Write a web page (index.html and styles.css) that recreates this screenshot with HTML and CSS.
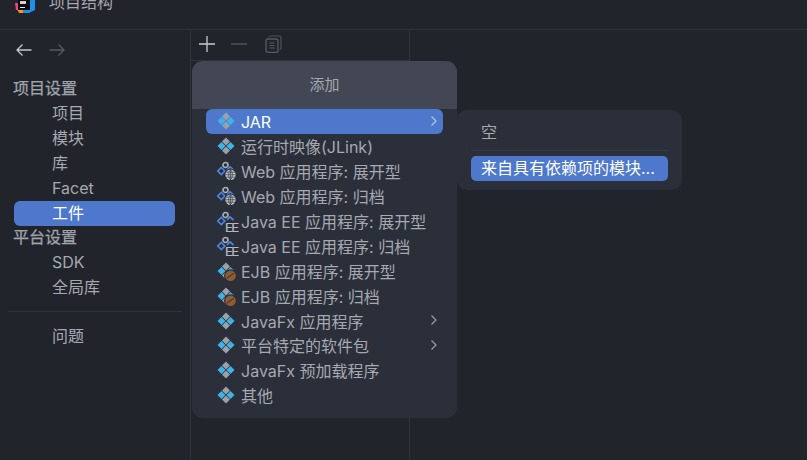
FILE: index.html
```html
<!DOCTYPE html>
<html lang="zh">
<head>
<meta charset="utf-8">
<title>项目结构</title>
<link rel="stylesheet" href="styles.css">
</head>
<body>
<svg class="defs" width="0" height="0" aria-hidden="true">
  <defs>
    <symbol id="diamonds" viewBox="0 0 18 18">
      <path d="M9 .5 13 4.500 9 8.500 5 4.500Z" fill="#9aa1ab"/>
      <path d="M9 9.500 13 13.500 9 17.500 5 13.500Z" fill="#9aa1ab"/>
      <path d="M4.500 5 8.500 9 4.500 13 .5 9Z" fill="#3fb3e6"/>
      <path d="M13.500 5 17.500 9 13.500 13 9.500 9Z" fill="#3fb3e6"/>
    </symbol>
    <symbol id="web-base" viewBox="0 0 18 18">
      <circle cx="8.500" cy="3" r="2.500" fill="none" stroke="#a6acb5" stroke-width="1.700"/>
      <path d="M4.300 5.500 7.800 9 4.300 12.500 .8 9Z" fill="none" stroke="#4a86e0" stroke-width="1.700"/>
      <path d="M10 7.800 13 5 16.500 8" fill="none" stroke="#4a86e0" stroke-width="1.700"/>
    </symbol>
    <symbol id="globe" viewBox="0 0 18 18">
      <circle cx="13.500" cy="12.700" r="6.200" fill="#2b2f39"/>
      <circle cx="13.500" cy="12.700" r="5.200" fill="#bcc1c8"/>
      <path d="M8.300 12.700H18.700M13.500 7.500V17.900M9 10.200H18M9 15.200H18M13.500 7.500C11 10 11 15.400 13.500 17.900M13.500 7.500C16 10 16 15.400 13.500 17.900" fill="none" stroke="#2b2f39" stroke-width=".6"/>
    </symbol>
    <symbol id="bean" viewBox="0 0 18 18">
      <circle cx="13.500" cy="13.700" r="6.500" fill="#2b2f39"/>
      <circle cx="13.500" cy="13.700" r="5.300" fill="#8f5b33"/>
      <path d="M9.800 16.200 17 11.200" stroke="#2b2f39" stroke-width="1"/>
    </symbol>
    <symbol id="chev" viewBox="0 0 10 12">
      <path d="M2.500 1.500 7 6 2.500 10.500" fill="none" stroke="currentColor" stroke-width="1.200"/>
    </symbol>
  </defs>
</svg>

<div class="window">
  <header class="titlebar">
    <svg class="logo" width="20" height="13" viewBox="0 0 20 13" aria-hidden="true">
      <path d="M0 3H4V10H1Z" fill="#ee3f8c"/>
      <path d="M2 9H9V13H4Z" fill="#f8941e"/>
      <path d="M14 0H20V10L14 13H8V9H14Z" fill="#1e8fe8"/>
      <rect x="3" y="0" width="12" height="10" fill="#0b0b0e"/>
      <rect x="5" y="7" width="5" height="1" fill="#e6e6e6"/>
      <rect x="5" y="1" width="6" height="3" fill="#cfcfcf"/>
    </svg>
    <span class="title">项目结构</span>
  </header>

  <div class="panes">
    <nav class="sidebar">
      <div class="history">
        <svg width="18" height="14" viewBox="0 0 18 14" aria-hidden="true"><path d="M16.500 7H2M7.500 1.500 2 7l5.500 5.500" fill="none" stroke="#c3c7ce" stroke-width="1.300"/></svg>
        <svg width="18" height="14" viewBox="0 0 18 14" aria-hidden="true"><path d="M1.500 7H16M10.500 1.500 16 7l-5.500 5.500" fill="none" stroke="#565a63" stroke-width="1.300"/></svg>
      </div>
      <div class="group">项目设置</div>
      <div class="item">项目</div>
      <div class="item">模块</div>
      <div class="item">库</div>
      <div class="item">Facet</div>
      <div class="item selected">工件</div>
      <div class="group second">平台设置</div>
      <div class="item">SDK</div>
      <div class="item">全局库</div>
      <div class="rule"></div>
      <div class="item">问题</div>
    </nav>

    <section class="middle">
      <div class="toolbar">
        <svg width="18" height="18" viewBox="0 0 18 18" aria-hidden="true"><path d="M9 1V17M1 9H17" stroke="#c9ccd3" stroke-width="1.300"/></svg>
        <svg width="18" height="18" viewBox="0 0 18 18" aria-hidden="true"><path d="M0 9H16" stroke="#565a63" stroke-width="1.300"/></svg>
        <svg width="18" height="18" viewBox="0 0 18 18" aria-hidden="true">
          <path d="M5 2.500A1.500 1.500 0 0 1 6.500 1H15A2 2 0 0 1 17 3V13A1.500 1.500 0 0 1 15.500 14.500" fill="none" stroke="#4f525b" stroke-width="1.200"/>
          <rect x="2" y="4" width="12" height="13.500" rx="2" fill="none" stroke="#565a63" stroke-width="1.300"/>
          <path d="M5.500 8H10.500M5.500 10.500H10.500M5.500 13H10.500" stroke="#565a63" stroke-width="1.200"/>
        </svg>
      </div>
    </section>

    <section class="detail"></section>
  </div>

  <div class="menu">
    <div class="menu-head">添加</div>
    <div class="menu-list">
      <div class="row active"><svg class="ic"><use href="#diamonds"/></svg><span class="latin">JAR</span><svg class="chev"><use href="#chev"/></svg></div>
      <div class="row"><svg class="ic"><use href="#diamonds"/></svg><span>运行时映像(JLink)</span></div>
      <div class="row"><svg class="ic"><use href="#web-base"/><use href="#globe"/></svg><span>Web 应用程序: 展开型</span></div>
      <div class="row"><svg class="ic"><use href="#web-base"/><use href="#globe"/></svg><span>Web 应用程序: 归档</span></div>
      <div class="row"><svg class="ic"><use href="#web-base"/></svg><span class="ee">EE</span><span>Java EE 应用程序: 展开型</span></div>
      <div class="row"><svg class="ic"><use href="#web-base"/></svg><span class="ee">EE</span><span>Java EE 应用程序: 归档</span></div>
      <div class="row"><svg class="ic"><use href="#diamonds"/><use href="#bean"/></svg><span>EJB 应用程序: 展开型</span></div>
      <div class="row"><svg class="ic"><use href="#diamonds"/><use href="#bean"/></svg><span>EJB 应用程序: 归档</span></div>
      <div class="row"><svg class="ic"><use href="#diamonds"/></svg><span>JavaFx 应用程序</span><svg class="chev"><use href="#chev"/></svg></div>
      <div class="row"><svg class="ic"><use href="#diamonds"/></svg><span>平台特定的软件包</span><svg class="chev"><use href="#chev"/></svg></div>
      <div class="row"><svg class="ic"><use href="#diamonds"/></svg><span>JavaFx 预加载程序</span></div>
      <div class="row"><svg class="ic"><use href="#diamonds"/></svg><span>其他</span></div>
    </div>
  </div>

  <div class="submenu">
    <div class="sub-row">空</div>
    <div class="sub-rule"></div>
    <div class="sub-row active">来自具有依赖项的模块...</div>
  </div>
</div>
</body>
</html>
```
FILE: styles.css
```css
* { box-sizing: border-box; }
html, body { margin: 0; padding: 0; }
body {
  width: 807px;
  height: 460px;
  overflow: hidden;
  background: #21242b;
  color: #a5a9b1;
  font-family: "Inter", "Noto Sans CJK SC", sans-serif;
  font-size: 16px;
}
.defs { position: absolute; }
symbol { overflow: visible; }
.window {
  position: relative;
  width: 807px;
  height: 460px;
  display: flex;
  flex-direction: column;
}
.titlebar {
  height: 30px;
  flex: none;
  display: flex;
  align-items: flex-start;
  border-bottom: 1px solid #30333c;
  padding-left: 15px;
  overflow: hidden;
}
.logo { flex: none; }
.title { margin-left: 14px; margin-top: -10px; line-height: 24px; font-size: 16px; color: #a5a9b1; }
.panes { flex: 1; display: flex; min-height: 0; }
.sidebar {
  width: 191px;
  flex: none;
  border-right: 1px solid #30333c;
  padding: 0 15px 0 13px;
}
.history {
  height: 40px;
  display: flex;
  align-items: center;
  gap: 15px;
  padding: 0 0 0 2px;
}
.group {
  height: 25px;
  line-height: 25px;
  color: #a0a4ac;
  -webkit-text-stroke: .25px #a0a4ac;
}
.history + .group { margin-top: 6px; }
.group.second { margin-top: -1px; }
.item {
  height: 25px;
  line-height: 25px;
  padding-left: 39px;
  color: #a5a9b1;
  border-radius: 6px;
}
.item.selected {
  background: #4d78cc;
  color: #fff;
  margin-left: 1px;
  padding-left: 38px;
}
.rule { height: 1px; background: #2e3139; margin: 11px -8px 12px -5px; }
.middle { width: 219px; flex: none; border-right: 1px solid #30333c; }
.toolbar {
  height: 31px;
  border-bottom: 1px solid #30333c;
  display: flex;
  align-items: center;
  gap: 15px;
  padding: 0 0 2px 7px;
}
.detail { flex: 1; }

.menu {
  position: absolute;
  left: 192px;
  top: 61px;
  width: 265px;
  height: 357px;
  background: #2b2f39;
  border-radius: 11px;
  overflow: hidden;
}
.menu-head {
  height: 48px;
  background: #424753;
  color: #a5a9b1;
  font-size: 15px;
  text-align: center;
  line-height: 48px;
}
.menu-list { padding: 0 14px; }
.row {
  position: relative;
  height: 24.900px;
  display: flex;
  align-items: center;
  padding-left: 11px;
  color: #a5a9b1;
  white-space: nowrap;
  border-radius: 6px;
}
.row > span:not(.ee) { margin-left: 6px; }
.row > .latin { margin-top: 2px; }
.row.active { background: #4d78cc; color: #fff; }
.ic { width: 18px; height: 18px; flex: none; overflow: visible; }
.ee {
  position: absolute;
  left: 19px;
  top: 11px;
  width: 14px;
  font-family: "Roboto", sans-serif;
  font-size: 13.500px;
  line-height: 14px;
  letter-spacing: -1.500px;
  color: #b4b8bf;
  -webkit-text-stroke: .2px #b4b8bf;
}
.chev { position: absolute; right: 4px; top: 6px; width: 10px; height: 12px; color: #9a9ea7; }
.active .chev { color: #b8c6e6; }

.submenu {
  position: absolute;
  left: 457px;
  top: 110px;
  width: 225px;
  height: 80px;
  background: #2b2f39;
  border-radius: 10px;
  padding: 10px 14px 0;
}
.sub-row {
  height: 25px;
  line-height: 25px;
  padding-left: 10px;
  color: #a5a9b1;
  white-space: nowrap;
  border-radius: 5px;
}
.sub-rule { height: 1px; background: #383c46; margin: 5px 0; }
.sub-row.active { background: #4d78cc; color: #fff; }
```
